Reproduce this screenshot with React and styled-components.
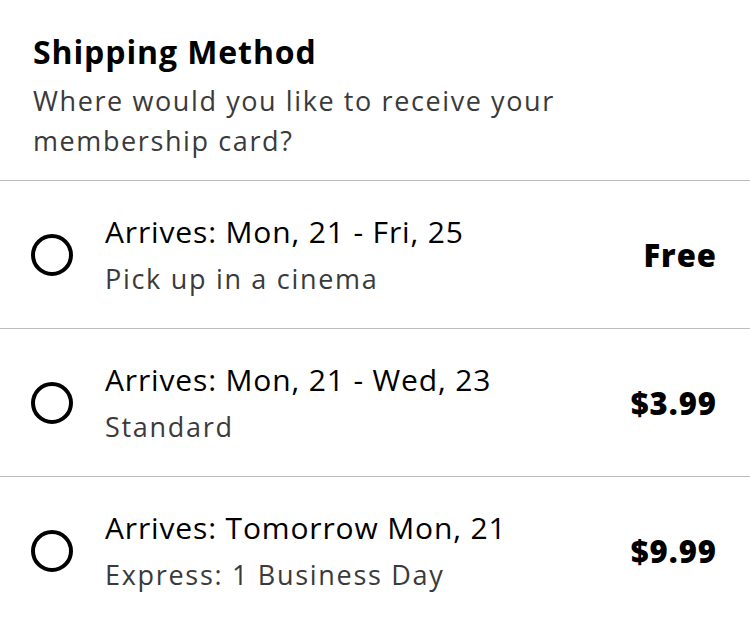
import styled, { createGlobalStyle } from "styled-components";

const Global = createGlobalStyle`
  body {
    margin: 0;
    background: #fff;
    font-family: "Open Sans", "Lato", sans-serif;
    color: #000;
  }
`

const Page = styled.div`
  width: 750px;
  height: 624px;
  overflow: hidden;
  background: #fff;
`

const Header = styled.div`
  padding: 32px 33px 19px;
  border-bottom: 1px solid #bdbdbd;
`

const Title = styled.h1`
  margin: 0 0 9px;
  font-size: 32px;
  line-height: 40px;
  font-weight: 700;
  letter-spacing: 0.9px;
`

const Subtitle = styled.p`
  margin: 0;
  max-width: 570px;
  font-size: 27px;
  line-height: 40px;
  letter-spacing: 1.6px;
  color: #3a3a3a;
`

const Option = styled.label`
  display: flex;
  align-items: center;
  height: 147px;
  padding: 0 33px 0 31px;
  border-bottom: 1px solid #bdbdbd;
  cursor: pointer;
`

const Radio = styled.span`
  width: 34px;
  height: 34px;
  border: 4px solid #000;
  border-radius: 50%;
  flex-shrink: 0;
  margin-right: 32px;
`

const Info = styled.div`
  flex: 1;
  display: flex;
  flex-direction: column;
  gap: 6px;
`

const When = styled.span`
  font-size: 30px;
  line-height: 42px;
  letter-spacing: 0.85px;
`

const How = styled.span`
  font-size: 27px;
  line-height: 40px;
  letter-spacing: 1.7px;
  color: #3a3a3a;
`

const Price = styled.span`
  font-size: 31px;
  font-weight: 800;
  letter-spacing: 1px;
`

const options = [
  { when: "Arrives: Mon, 21 - Fri, 25", how: "Pick up in a cinema", price: "Free" },
  { when: "Arrives: Mon, 21 - Wed, 23", how: "Standard", price: "$3.99" },
  { when: "Arrives: Tomorrow Mon, 21", how: "Express: 1 Business Day", price: "$9.99" },
]

export default function App() {
  return <>
    <Global />
    <Page>
      <Header>
        <Title>Shipping Method</Title>
        <Subtitle>Where would you like to receive your membership card?</Subtitle>
      </Header>
      {options.map(o => (
        <Option key={o.when}>
          <Radio />
          <Info>
            <When>{o.when}</When>
            <How>{o.how}</How>
          </Info>
          <Price>{o.price}</Price>
        </Option>
      ))}
    </Page>
  </>
}
